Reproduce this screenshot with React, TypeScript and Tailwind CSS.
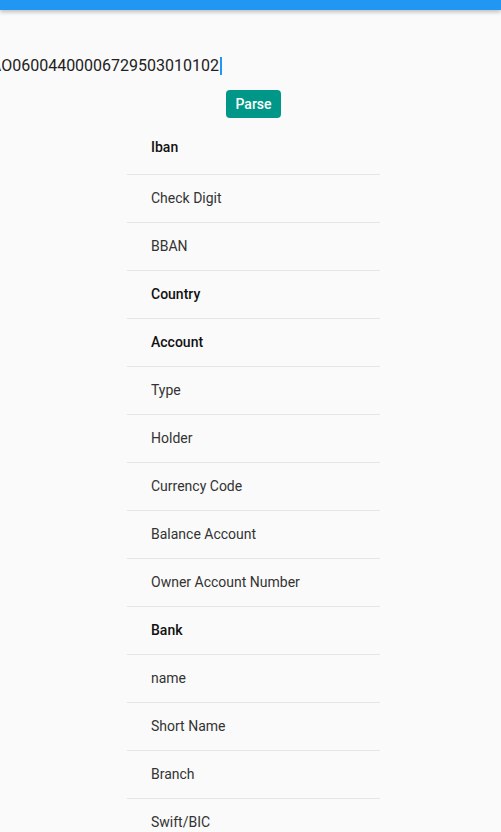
const rows: { label: string; bold?: boolean }[] = [
  { label: "Iban", bold: true },
  { label: "Check Digit" },
  { label: "BBAN" },
  { label: "Country", bold: true },
  { label: "Account", bold: true },
  { label: "Type" },
  { label: "Holder" },
  { label: "Currency Code" },
  { label: "Balance Account" },
  { label: "Owner Account Number" },
  { label: "Bank", bold: true },
  { label: "name" },
  { label: "Short Name" },
  { label: "Branch" },
  { label: "Swift/BIC" },
];

export default function App() {
  return (
    <div className="h-[832px] w-full overflow-hidden bg-[#fafafa] font-['Roboto',sans-serif]">
      <div className="h-[10px] bg-[#2196f3] shadow-[0_2px_4px_rgba(0,0,0,0.25)]" />

      <div className="mt-[44px] flex h-6 w-[222px] items-center justify-end overflow-hidden">
        <span className="whitespace-nowrap text-[16px] leading-6 text-[#212121]">AO06004400006729503010102</span>
        <span className="ml-[1px] h-[18px] w-[2px] shrink-0 bg-[#2196f3]" />
      </div>

      <button className="ml-[226px] mt-3 flex h-7 w-[55px] items-center justify-center rounded-[4px] bg-[#009688] text-[14px] font-medium text-white">
        Parse
      </button>

      <div className="ml-[127px] mt-[9px] w-[253px]">
        {rows.map((row, i) => (
          <div
            key={row.label}
            className={`flex h-12 items-center border-b border-[#e6e6e6] pl-6 text-[14px] ${
              i === 0 ? "pb-[6px]" : ""
            } ${row.bold ? "font-medium text-[#111111]" : "text-[#333333]"}`}
          >
            {row.label}
          </div>
        ))}
      </div>
    </div>
  );
}
